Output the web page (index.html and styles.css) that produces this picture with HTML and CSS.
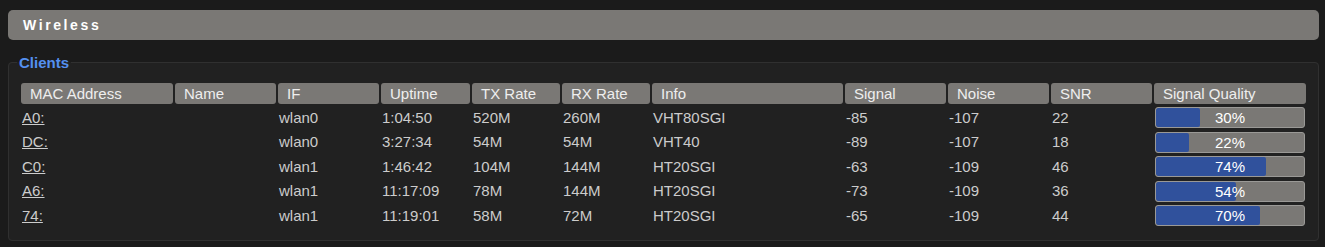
FILE: index.html
```html
<!DOCTYPE html>
<html>
<head>
<meta charset="utf-8">
<link rel="stylesheet" href="styles.css">
</head>
<body>
<div class="page">
  <h2 class="section-title">Wireless</h2>
  <fieldset class="panel">
    <legend class="panel-legend">Clients</legend>
    <table class="clients">
      <thead>
        <tr>
          <th class="c-mac">MAC Address</th>
          <th class="c-name">Name</th>
          <th class="c-if">IF</th>
          <th class="c-up">Uptime</th>
          <th class="c-tx">TX Rate</th>
          <th class="c-rx">RX Rate</th>
          <th class="c-info">Info</th>
          <th class="c-sig">Signal</th>
          <th class="c-noise">Noise</th>
          <th class="c-snr">SNR</th>
          <th class="c-q">Signal Quality</th>
        </tr>
      </thead>
      <tbody>
        <tr>
          <td><a class="mac" href="#">A0:</a></td><td></td><td>wlan0</td><td>1:04:50</td><td>520M</td><td>260M</td><td>VHT80SGI</td><td>-85</td><td>-107</td><td>22</td>
          <td><div class="bar"><div class="fill" style="width:30%"></div><span class="pct">30%</span></div></td>
        </tr>
        <tr>
          <td><a class="mac" href="#">DC:</a></td><td></td><td>wlan0</td><td>3:27:34</td><td>54M</td><td>54M</td><td>VHT40</td><td>-89</td><td>-107</td><td>18</td>
          <td><div class="bar"><div class="fill" style="width:22%"></div><span class="pct">22%</span></div></td>
        </tr>
        <tr>
          <td><a class="mac" href="#">C0:</a></td><td></td><td>wlan1</td><td>1:46:42</td><td>104M</td><td>144M</td><td>HT20SGI</td><td>-63</td><td>-109</td><td>46</td>
          <td><div class="bar"><div class="fill" style="width:74%"></div><span class="pct">74%</span></div></td>
        </tr>
        <tr>
          <td><a class="mac" href="#">A6:</a></td><td></td><td>wlan1</td><td>11:17:09</td><td>78M</td><td>144M</td><td>HT20SGI</td><td>-73</td><td>-109</td><td>36</td>
          <td><div class="bar"><div class="fill" style="width:54%"></div><span class="pct">54%</span></div></td>
        </tr>
        <tr>
          <td><a class="mac" href="#">74:</a></td><td></td><td>wlan1</td><td>11:19:01</td><td>58M</td><td>72M</td><td>HT20SGI</td><td>-65</td><td>-109</td><td>44</td>
          <td><div class="bar"><div class="fill" style="width:70%"></div><span class="pct">70%</span></div></td>
        </tr>
      </tbody>
    </table>
  </fieldset>
</div>
</body>
</html>
```

FILE: styles.css
```css
html, body {
  margin: 0;
  padding: 0;
  background: #1b1b1b;
  font-family: "Liberation Sans", Arial, sans-serif;
  font-size: 14px;
  color: #cccccc;
}

.page {
  padding: 10px 6px 0 8px;
}

.section-title {
  margin: 0;
  height: 30px;
  line-height: 30px;
  padding: 0 15px;
  background: #7a7875;
  border-radius: 5px;
  color: #ffffff;
  font-size: 14px;
  font-weight: bold;
  letter-spacing: 2.6px;
}

.panel {
  margin: 14px 0 0 0;
  padding: 10px 12px 11px 12px;
  border: 1px solid #303030;
  border-radius: 4px;
  background: #212121;
  min-width: 0;
}

.panel-legend {
  padding: 0 2px;
  margin-left: -4px;
  color: #5490f0;
  font-weight: bold;
  font-size: 15px;
}

.clients {
  border-collapse: separate;
  border-spacing: 2px 2px;
  margin: 0 -2px;
  table-layout: fixed;
  width: calc(100% + 4px);
}

.clients th,
.clients td {
  box-sizing: border-box;
  vertical-align: middle;
}

.clients th {
  background: #7a7875;
  color: #eeeeee;
  font-weight: normal;
  text-align: left;
  height: 21px;
  padding: 0 0 0 9px;
  border-radius: 3px;
  line-height: 21px;
  font-size: 15px;
}

.clients td {
  height: 22.5px;
  padding: 1px 1px 0 1px;
  line-height: 18px;
  white-space: nowrap;
  overflow: hidden;
  font-size: 15px;
}

.c-mac { width: 152px; }
.c-name { width: 101px; }
.c-if { width: 101px; }
.c-up { width: 89px; }
.c-tx { width: 88px; }
.c-rx { width: 88px; }
.c-info { width: 191px; }
.c-sig { width: 101px; }
.c-noise { width: 101px; }
.c-snr { width: 101px; }
.c-q { width: 152px; }

.mac {
  color: #cccccc;
  text-decoration: underline;
}

.bar {
  position: relative;
  height: 21px;
  background: #7a7875;
  border: 1px solid #9a9996;
  border-radius: 3px;
  overflow: hidden;
  box-sizing: border-box;
}

.fill {
  height: 100%;
  background: #30519c;
  border-radius: 2px;
}

.pct {
  position: absolute;
  left: 0;
  right: 0;
  top: 0;
  text-align: center;
  line-height: 19px;
  color: #ffffff;
}
```
